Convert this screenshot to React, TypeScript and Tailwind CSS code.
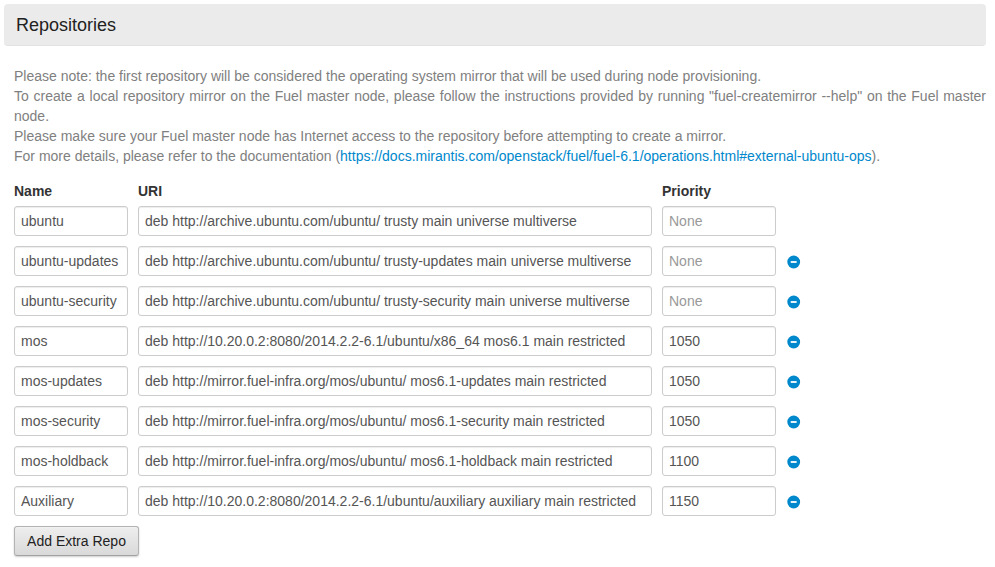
const repos = [
  ['ubuntu', 'deb http://archive.ubuntu.com/ubuntu/ trusty main universe multiverse', ''],
  ['ubuntu-updates', 'deb http://archive.ubuntu.com/ubuntu/ trusty-updates main universe multiverse', ''],
  ['ubuntu-security', 'deb http://archive.ubuntu.com/ubuntu/ trusty-security main universe multiverse', ''],
  ['mos', 'deb http://10.20.0.2:8080/2014.2.2-6.1/ubuntu/x86_64 mos6.1 main restricted', '1050'],
  ['mos-updates', 'deb http://mirror.fuel-infra.org/mos/ubuntu/ mos6.1-updates main restricted', '1050'],
  ['mos-security', 'deb http://mirror.fuel-infra.org/mos/ubuntu/ mos6.1-security main restricted', '1050'],
  ['mos-holdback', 'deb http://mirror.fuel-infra.org/mos/ubuntu/ mos6.1-holdback main restricted', '1100'],
  ['Auxiliary', 'deb http://10.20.0.2:8080/2014.2.2-6.1/ubuntu/auxiliary auxiliary main restricted', '1150'],
];

const field =
  'h-[30px] rounded-[3px] border border-[#cccccc] bg-white px-1.5 text-[14px] leading-5 text-[#555555] shadow-[inset_0_1px_1px_rgba(0,0,0,0.075)] outline-none placeholder:text-[#999999]';

function RemoveIcon() {
  return (
    <svg width="14" height="14" viewBox="0 0 14 14" aria-hidden="true">
      <circle cx="6.7" cy="7" r="6.4" fill="#0088cc" />
      <rect x="3.7" y="6" width="6" height="2" rx="0.4" fill="#e6f3fa" />
    </svg>
  );
}

export default function App() {
  return (
    <div className="h-[567px] w-[995px] overflow-hidden bg-white pt-1 pl-1 font-['Liberation_Sans',Arial,sans-serif] text-[14px] leading-5">
      <h3 className="flex h-[42px] w-[982px] items-center rounded-[4px] border-b border-[#e3e3e3] bg-[#ebebeb] pl-3 text-[18px] font-normal text-[#222222]">
        Repositories
      </h3>
      <div className="mt-5 ml-2.5 w-[972px] text-justify text-[#808080]">
        <p>Please note: the first repository will be considered the operating system mirror that will be used during node provisioning.</p>
        <p>To create a local repository mirror on the Fuel master node, please follow the instructions provided by running "fuel-createmirror --help" on the Fuel master node.</p>
        <p>Please make sure your Fuel master node has Internet access to the repository before attempting to create a mirror.</p>
        <p>
          For more details, please refer to the documentation (
          <a className="text-[#0088cc]" href="#docs">https://docs.mirantis.com/openstack/fuel/fuel-6.1/operations.html#external-ubuntu-ops</a>).
        </p>
      </div>
      <div className="mt-[15px] ml-2.5 flex gap-2.5 font-bold text-[#333333]">
        <div className="w-[114px]">Name</div>
        <div className="w-[514px]">URI</div>
        <div className="w-[114px]">Priority</div>
      </div>
      <div className="mt-[5px] ml-2.5 flex flex-col gap-2.5">
        {repos.map(([name, uri, priority], i) => (
          <div key={name} className="flex items-center gap-2.5">
            <input className={`${field} w-[114px]`} defaultValue={name} />
            <input className={`${field} w-[514px]`} defaultValue={uri} />
            <input className={`${field} w-[114px]`} defaultValue={priority} placeholder="None" />
            {i > 0 && (
              <button type="button" aria-label="Remove" className="mt-0.5 ml-px">
                <RemoveIcon />
              </button>
            )}
          </div>
        ))}
      </div>
      <button
        type="button"
        className="mt-2.5 ml-2.5 h-[30px] w-[125px] rounded-[3px] border border-[#b3b3b3] border-b-[#a2a2a2] bg-linear-to-b from-[#eeeeee] to-[#d9d9d9] text-[14px] leading-5 text-[#222222] shadow-[inset_0_1px_0_rgba(255,255,255,0.2),0_1px_2px_rgba(0,0,0,0.2)]"
      >
        Add Extra Repo
      </button>
    </div>
  );
}
